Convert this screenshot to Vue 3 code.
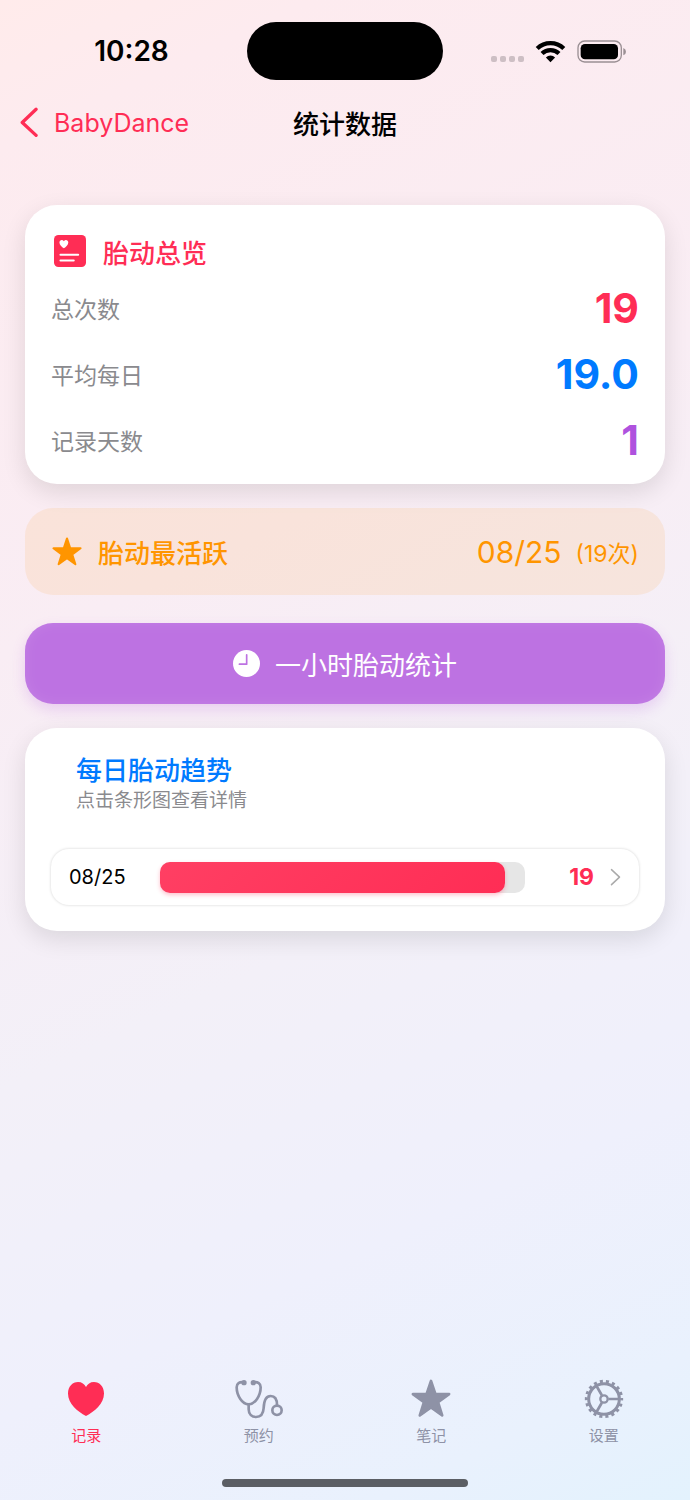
<script setup>
import { ref } from 'vue'

const totals = [
  { label: '总次数', value: '19', tone: 'pink' },
  { label: '平均每日', value: '19.0', tone: 'blue' },
  { label: '记录天数', value: '1', tone: 'purple' },
]

const days = [{ date: '08/25', count: 19, share: 94.5 }]

const tabs = [
  { id: 'record', label: '记录' },
  { id: 'visit', label: '预约' },
  { id: 'notes', label: '笔记' },
  { id: 'settings', label: '设置' },
]
const active = ref('record')

const star =
  '0,-10 2.29,-3.16 9.51,-3.09 3.71,1.21 5.88,8.09 0,3.9 -5.88,8.09 -3.71,1.21 -9.51,-3.09 -2.29,-3.16'
</script>

<template>
  <div class="screen">
    <div class="status">
      <span class="time">10:28</span>
      <span class="island"></span>
      <span class="signals">
        <span class="dots"><i></i><i></i><i></i><i></i></span>
        <svg class="wifi" viewBox="570 117 94 69" aria-hidden="true">
          <g fill="none" stroke="#000" stroke-width="13">
            <path d="M576.7 142.3A58 58 0 0 1 657.3 142.3" />
            <path d="M591.3 157.4A37 37 0 0 1 642.7 157.4" />
          </g>
          <path d="M617 184L603 169.6A20 20 0 0 1 631 169.6Z" />
        </svg>
        <svg class="battery" viewBox="696 117 150 69" aria-hidden="true">
          <rect x="699" y="120" width="130" height="63" rx="20" fill="none" stroke="#9b9094" stroke-width="4" />
          <rect x="707" y="129" width="112" height="46" rx="13" />
          <path d="M835 141Q843 144 843 152T835 163Z" fill="#9b9094" />
        </svg>
      </span>
    </div>

    <header class="nav">
      <button class="back" type="button">
        <svg viewBox="62 322 56 94" aria-hidden="true">
          <path d="M110 329L68 369L110 408" fill="none" stroke="currentColor" stroke-width="10" stroke-linecap="round" stroke-linejoin="round" />
        </svg>
        <span>BabyDance</span>
      </button>
      <h1>统计数据</h1>
    </header>

    <main class="content">
      <section class="card overview">
        <h2>
          <svg viewBox="133 137 94 94" aria-hidden="true">
            <rect x="133" y="137" width="94" height="94" rx="13" fill="#ff2d55" />
            <path d="M162 176C156 172 149 166 149 159C149 151 158 149 162 155C166 149 175 151 175 159C175 166 168 172 162 176Z" fill="#fff" />
            <path d="M152 195H204M152 212H191" stroke="#fff" stroke-width="6" stroke-linecap="round" />
          </svg>
          <span>胎动总览</span>
        </h2>
        <dl>
          <div v-for="t in totals" :key="t.label">
            <dt>{{ t.label }}</dt>
            <dd :class="t.tone">{{ t.value }}</dd>
          </div>
        </dl>
      </section>

      <section class="peak">
        <svg viewBox="-11 -11 22 21" aria-hidden="true">
          <polygon :points="star" fill="currentColor" stroke="currentColor" stroke-width="1.4" stroke-linejoin="round" />
        </svg>
        <h2>胎动最活跃</h2>
        <span class="peak-date">08/25</span>
        <span class="peak-count">(19次)</span>
      </section>

      <button class="hourly" type="button">
        <svg viewBox="669 450 80 80" aria-hidden="true">
          <circle cx="709" cy="490" r="40" fill="#fff" />
          <path d="M709.5 464V492H688" fill="none" stroke="#bd72e2" stroke-width="5" stroke-linecap="round" stroke-linejoin="round" />
        </svg>
        <span>一小时胎动统计</span>
      </button>

      <section class="card trend">
        <div class="trend-head">
          <h2>每日胎动趋势</h2>
          <p>点击条形图查看详情</p>
        </div>
        <button v-for="d in days" :key="d.date" class="day" type="button">
          <span class="day-date">{{ d.date }}</span>
          <span class="track"><span class="fill" :style="{ width: d.share + '%' }"></span></span>
          <span class="day-count">{{ d.count }}</span>
          <svg viewBox="778 458 32 54" aria-hidden="true">
            <path d="M782 463L806 485.5L782 508" fill="none" stroke="#aaa" stroke-width="4.5" stroke-linecap="round" stroke-linejoin="round" />
          </svg>
        </button>
      </section>
    </main>

    <nav class="tabs">
      <button
        v-for="t in tabs"
        :key="t.id"
        type="button"
        :class="{ on: active === t.id }"
        @click="active = t.id"
      >
        <svg v-if="t.id === 'record'" width="36" height="34" viewBox="86 52 107 101" aria-hidden="true">
          <path d="M139.5 153C115 140 86 116 86 86C86 66 99 52 116 52C127 52 135 58 139.5 67C144 58 152 52 163 52C180 52 193 66 193 86C193 116 164 140 139.5 153Z" fill="currentColor" />
        </svg>
        <svg v-else-if="t.id === 'visit'" width="50" height="40" viewBox="582 41 150 120" aria-hidden="true">
          <g fill="none" stroke="currentColor" stroke-width="8" stroke-linecap="round">
            <path d="M612 51C598 49 590 54 590 66C590 91 607 117 626 117C645 117 662 91 662 66C662 54 654 49 640 51" />
            <path d="M626 117V132C626 147 636 155 648 155C662 155 670 145 671 128C672 105 679 92 692 92C704 92 711 102 711 119" />
            <circle cx="711" cy="135" r="14" />
          </g>
          <g fill="currentColor"><circle cx="612" cy="52" r="8" /><circle cx="640" cy="52" r="8" /></g>
        </svg>
        <svg v-else-if="t.id === 'notes'" width="42" height="40" viewBox="-11 -11 22 21" aria-hidden="true">
          <polygon :points="star" fill="currentColor" stroke="currentColor" stroke-width="1.4" stroke-linejoin="round" />
        </svg>
        <svg v-else width="40" height="40" viewBox="-60 -60 120 120" aria-hidden="true">
          <g fill="none" stroke="currentColor">
            <circle r="46" stroke-width="9" />
            <circle r="53" stroke-width="9" pathLength="36" stroke-dasharray="1 1" stroke-dashoffset="0.5" />
            <circle r="11" stroke-width="7" />
            <path d="M13 0H45M-6.5 -11.3L-22.5 -39M-6.5 11.3L-22.5 39" stroke-width="8" />
          </g>
        </svg>
        <span>{{ t.label }}</span>
      </button>
    </nav>
    <div class="home"></div>
  </div>
</template>

<style>
body {
  margin: 0;
}
</style>

<style scoped>
.screen {
  min-height: 100vh;
  display: flex;
  flex-direction: column;
  box-sizing: border-box;
  font-family: Inter, "Noto Sans CJK SC", sans-serif;
  color: #000;
  background: linear-gradient(155deg, #ffebeb 0%, #fdebef 8%, #f9edf4 36%, #f3f0f8 60%, #eff0fc 78%, #e9f1fd 92%, #e3f2fd 100%);
}

h1, h2, p, dl, dd {
  margin: 0;
}

button {
  margin: 0;
  padding: 0;
  border: 0;
  background: none;
  font: inherit;
  color: inherit;
  cursor: pointer;
}

svg {
  display: block;
  flex: none;
}

.status {
  height: 102px;
  display: grid;
  grid-template-columns: 1fr 196px 1fr;
  align-items: center;
}

.time {
  padding-left: 16px;
  text-align: center;
  font-size: 28px;
  font-weight: 600;
}

.island {
  height: 58px;
  border-radius: 29px;
  background: #000;
}

.signals {
  display: flex;
  justify-content: flex-end;
  align-items: center;
  gap: 11px;
  padding-right: 63px;
}

.dots {
  display: flex;
  gap: 3px;
  padding-top: 15px;
}

.dots i {
  width: 6px;
  height: 6px;
  border-radius: 2px;
  background: #cdbfc4;
}

.wifi {
  width: 31px;
  height: 23px;
}

.battery {
  width: 50px;
  height: 23px;
}

.nav {
  height: 41px;
  display: grid;
  grid-template-columns: 1fr auto 1fr;
  align-items: center;
}

.back {
  display: flex;
  align-items: center;
  gap: 15px;
  padding-left: 20px;
  font-size: 25px;
  color: #ff2d55;
}

.back svg {
  width: 19px;
  height: 31px;
}

h1 {
  font-size: 26px;
  font-weight: 500;
}

.content {
  flex: 1;
  display: flex;
  flex-direction: column;
  padding: 62px 25px 24px;
}

.card {
  border-radius: 32px;
  background: #fff;
  box-shadow: 0 8px 24px rgba(0, 0, 0, 0.11);
}

.overview {
  padding: 20px 26px 22px;
}

h2 {
  font-size: 26px;
  font-weight: 500;
}

.overview h2 {
  height: 52px;
  margin-bottom: 9px;
  padding-left: 3px;
  display: flex;
  align-items: center;
  gap: 17px;
  color: #ff2d55;
}

.overview h2 svg {
  width: 32px;
  height: 32px;
}

dl {
  display: grid;
  gap: 22px;
}

dl div {
  height: 44px;
  display: flex;
  align-items: center;
  justify-content: space-between;
}

dt {
  font-size: 23px;
  color: #8a8a8e;
}

dd {
  font-size: 41px;
  font-weight: 700;
}

.pink {
  color: #ff2d55;
}

.blue {
  color: #007aff;
}

.purple {
  color: #af52de;
}

.peak {
  height: 87px;
  margin: 24px 0 28px;
  padding: 0 26px;
  display: flex;
  align-items: center;
  border-radius: 28px;
  background: rgba(255, 149, 0, 0.1);
  color: #ff9500;
}

.peak svg {
  width: 32px;
  height: 30px;
}

.peak h2 {
  flex: 1;
  margin-left: 15px;
}

.peak-date {
  font-size: 30px;
}

.peak-count {
  margin-left: 14px;
  font-size: 23px;
}

.hourly {
  height: 81px;
  margin-bottom: 24px;
  display: flex;
  align-items: center;
  justify-content: center;
  gap: 15px;
  border-radius: 28px;
  background: #bd72e2;
  box-shadow: 0 6px 14px rgba(175, 82, 222, 0.2), inset 0 0 14px rgba(255, 255, 255, 0.1);
  font-size: 26px;
  color: #fff;
}

.hourly svg {
  width: 27px;
  height: 27px;
}

.trend {
  padding: 26px;
}

.trend-head {
  padding: 0 25px 35px;
}

.trend h2 {
  line-height: 34px;
  color: #007aff;
}

.trend p {
  font-size: 19px;
  line-height: 26px;
  color: #8a8a8e;
}

.day {
  width: 100%;
  height: 56px;
  display: flex;
  align-items: center;
  padding: 0 18px;
  border-radius: 18px;
  box-shadow: 0 0 3px rgba(0, 0, 0, 0.18);
}

.day-date {
  width: 91px;
  text-align: left;
  font-size: 20px;
}

.track {
  flex: 1;
  height: 31px;
  border-radius: 10px;
  background: #e6e6e6;
}

.fill {
  display: block;
  height: 100%;
  border-radius: 10px;
  background: linear-gradient(135deg, #ff3f63, #ff2d55);
  box-shadow: 0 2px 4px rgba(255, 45, 85, 0.3);
}

.day-count {
  width: 69px;
  margin-right: 16px;
  text-align: right;
  font-size: 23px;
  font-weight: 700;
  color: #ff2d55;
}

.day svg {
  width: 11px;
  height: 18px;
}

.tabs {
  display: grid;
  grid-template-columns: repeat(4, 1fr);
}

.tabs button {
  display: grid;
  grid-template-rows: 44px 26px;
  align-items: center;
  justify-items: center;
  font-size: 15px;
  color: #8e92a6;
}

.tabs .on {
  color: #ff2d55;
}

.home {
  width: 246px;
  height: 8px;
  margin: 32px auto 13px;
  border-radius: 4px;
  background: #5b5e64;
}
</style>
